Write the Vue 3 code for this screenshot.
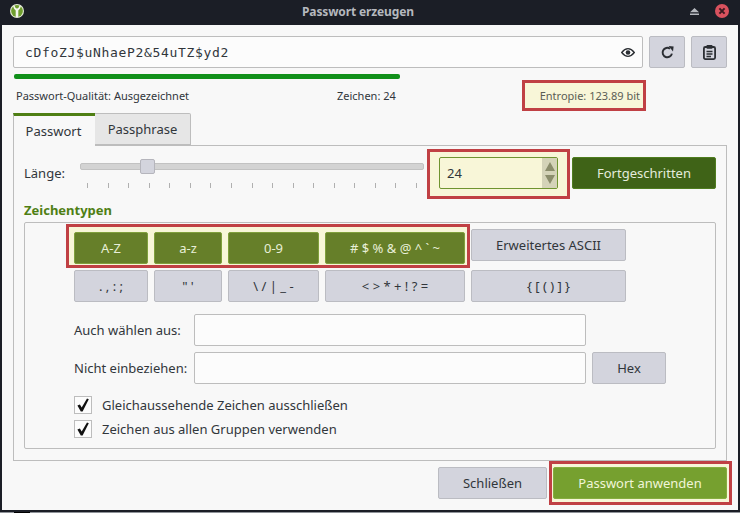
<script setup>
const activeButtons = [
  { label: 'A-Z', w: 74 },
  { label: 'a-z', w: 68 },
  { label: '0-9', w: 91 },
  { label: '# $ % & @ ^ ` ~', w: 140 },
]
const plainButtons = [
  { label: '. , : ;', w: 74 },
  { label: '" \'', w: 68 },
  { label: '\\ / | _ -', w: 91 },
  { label: '< > * + ! ? =', w: 140 },
  { label: '{ [ ( ) ] }', w: 155 },
]
const ticks = Array.from({ length: 17 })
const checks = ['Gleichaussehende Zeichen ausschließen', 'Zeichen aus allen Gruppen verwenden']
</script>

<template>
  <div class="window">
    <header class="titlebar">
      <svg class="logo" width="14" height="14" viewBox="0 0 14 14">
        <circle cx="7" cy="7" r="7" fill="#e6ecd8" />
        <circle cx="7" cy="7" r="5.9" fill="#6f9e2e" />
        <path d="M3 1.8 C3.6 4.6 5 6 5.7 6.4 V13 H8.3 V6.4 C9 6 10.4 4.6 11 1.8 H9.3 C9.1 3.4 8.2 4.4 7 4.4 C5.8 4.4 4.9 3.4 4.7 1.8 Z" fill="#f4f6ee" />
      </svg>
      <span class="title">Passwort erzeugen</span>
      <svg class="eject" width="9" height="7" viewBox="0 0 9 7">
        <path d="M4.5 0 L9 4.2 H0 Z M0 5.4 H9 V7 H0 Z" fill="#b5b8be" />
      </svg>
      <span class="close">
        <svg width="14" height="14" viewBox="0 0 14 14"><path d="M4.4 4.4 L9.6 9.6 M9.6 4.4 L4.4 9.6" stroke="#3a1a20" stroke-width="2" /></svg>
      </span>
    </header>

    <main class="body">
      <div class="pw-row">
        <div class="field pw-field">
          <span class="pw-text">cDfoZJ$uNhaeP2&amp;54uTZ$yd2</span>
          <svg width="14" height="9" viewBox="0 0 14 9">
            <path d="M0.7 4.5 C3 1.5 5 0.7 7 0.7 C9 0.7 11 1.5 13.3 4.5 C11 7.5 9 8.3 7 8.3 C5 8.3 3 7.5 0.7 4.5 Z" fill="none" stroke="#2b2e33" stroke-width="1.3" />
            <circle cx="7" cy="4.5" r="2.3" fill="#2b2e33" />
          </svg>
        </div>
        <button class="btn icon-btn">
          <svg width="13" height="13" viewBox="0 0 13 13">
            <path d="M10.9 7.6 A4.7 4.7 0 1 1 9 2.7" fill="none" stroke="#2b2e33" stroke-width="2" />
            <path d="M7.6 0 L12.6 0.4 L12 5.6 Z" fill="#2b2e33" />
          </svg>
        </button>
        <button class="btn icon-btn">
          <svg width="13" height="15" viewBox="0 0 13 15">
            <rect x="0.9" y="2" width="11.2" height="12.1" rx="1.5" fill="none" stroke="#2b2e33" stroke-width="1.8" />
            <rect x="3.5" y="0" width="6" height="3.8" rx="0.8" fill="#2b2e33" />
            <path d="M3.5 6.5 H9.5 M3.5 9 H9.5 M3.5 11.5 H8" stroke="#2b2e33" stroke-width="1.3" />
          </svg>
        </button>
      </div>

      <div class="progress"></div>

      <div class="stats">
        <span>Passwort-Qualität: Ausgezeichnet</span>
        <span>Zeichen: 24</span>
        <span class="mark entropy">Entropie: 123.89 bit</span>
      </div>

      <div class="tabs">
        <span class="tab active">Passwort</span>
        <span class="tab">Passphrase</span>
      </div>

      <section class="pane">
        <div class="length-row">
          <span class="length-label">Länge:</span>
          <div class="slider">
            <div class="track"><span class="handle"></span></div>
            <div class="ticks"><i v-for="(t, i) in ticks" :key="i"></i></div>
          </div>
          <div class="mark spin-mark">
            <div class="spin">
              <span class="spin-value">24</span>
              <span class="spin-arrows">
                <svg width="10" height="26" viewBox="0 0 10 26">
                  <path d="M5 2 L10 11 H0 Z M0 15 H10 L5 24 Z" fill="#8b8d6c" />
                </svg>
              </span>
            </div>
          </div>
          <button class="btn dark">Fortgeschritten</button>
        </div>

        <h3 class="group-title">Zeichentypen</h3>
        <div class="group">
          <div class="row-one">
            <div class="mark active-mark">
              <button v-for="b in activeButtons" :key="b.label" class="btn on" :style="{ width: b.w + 'px' }">{{ b.label }}</button>
            </div>
            <button class="btn ascii">Erweitertes ASCII</button>
          </div>
          <div class="row-two">
            <button v-for="b in plainButtons" :key="b.label" class="btn" :style="{ width: b.w + 'px' }">{{ b.label }}</button>
          </div>
          <div class="form-row first">
            <span class="form-label">Auch wählen aus:</span>
            <div class="field form-input"></div>
          </div>
          <div class="form-row">
            <span class="form-label">Nicht einbeziehen:</span>
            <div class="field form-input"></div>
            <button class="btn hex">Hex</button>
          </div>
          <div class="checks">
            <label v-for="c in checks" :key="c" class="check">
              <span class="box">
                <svg width="14" height="14" viewBox="0 0 14 14"><path d="M1.4 7.6 L3.9 6.6 L5.7 9.4 L11 0.6 L12.8 1.2 L6.6 13.6 H4.8 Z" fill="#111" /></svg>
              </span>
              {{ c }}
            </label>
          </div>
        </div>
      </section>

      <footer class="actions">
        <button class="btn close-btn">Schließen</button>
        <div class="mark apply-mark">
          <button class="btn apply">Passwort anwenden</button>
        </div>
      </footer>
    </main>
    <div class="strip"><span class="strip-dark"></span></div>
  </div>
</template>

<style>
html, body { margin: 0; background: #1b1e26; }
</style>

<style scoped>
.window {
  width: 740px;
  height: 513px;
  background: #1b1e26;
  display: flex;
  flex-direction: column;
  overflow: hidden;
  font-family: "Noto Sans", sans-serif;
  font-size: 13px;
  color: #31363b;
}
.titlebar {
  box-sizing: border-box;
  height: 25px;
  flex: none;
  display: flex;
  align-items: center;
  padding: 0 11px 3px 10px;
  color: #b5b8be;
}
.logo { flex: none; }
.title {
  flex: 1;
  text-align: center;
  font-weight: 700;
  font-size: 12px;
  letter-spacing: -0.13px;
  padding-left: 2px;
}
.eject { margin-right: 16px; }
.close {
  width: 14px;
  height: 14px;
  border-radius: 50%;
  background: #d9525e;
  display: flex;
}
.body {
  flex: none;
  width: 736px;
  height: 485px;
  margin-left: 2px;
  box-sizing: border-box;
  background: #f8f8f8;
  padding: 11px 11px 0;
  display: flex;
  flex-direction: column;
}
.pw-row { display: flex; gap: 6px; height: 32px; }
.field {
  box-sizing: border-box;
  background: #fcfcfc;
  border: 1px solid #bdbdbd;
  border-radius: 2px;
}
.pw-field {
  flex: 1;
  display: flex;
  align-items: center;
  justify-content: space-between;
  padding: 0 7px 0 11px;
}
.pw-text {
  font-family: "DejaVu Sans Mono", monospace;
  font-size: 13px;
  letter-spacing: 0.67px;
  color: #31363b;
}
.btn {
  box-sizing: border-box;
  height: 32px;
  margin: 0;
  padding: 0;
  background: #d3d4dd;
  border: 1px solid #bbbcc2;
  border-radius: 2px;
  font: inherit;
  color: #31363b;
  display: flex;
  align-items: center;
  justify-content: center;
  flex: none;
}
.icon-btn { width: 36px; }
.progress {
  width: 386px;
  height: 5px;
  margin: 6px 0 0 1px;
  background: #11901a;
  border-radius: 2px;
}
.stats {
  height: 31px;
  margin-top: 1px;
  display: grid;
  grid-template-columns: 321px 185px 124px;
  align-items: center;
  padding-left: 3px;
  font-size: 11px;
}
.mark {
  box-sizing: border-box;
  background: #f8f6d8;
  border: 3px solid #c04044;
}
.entropy {
  height: 31px;
  display: flex;
  align-items: center;
  justify-content: flex-end;
  padding-right: 3px;
  color: #5b5d55;
}
.tabs { display: flex; height: 32px; margin-top: 2px; }
.tab {
  box-sizing: border-box;
  height: 32px;
  display: flex;
  align-items: center;
  justify-content: center;
  width: 96px;
  background: #e6e6e6;
  border: 1px solid #bdbdbd;
  border-left: 0;
  border-radius: 0 2px 0 0;
}
.tab.active {
  width: 82px;
  background: #f8f8f8;
  border-left: 1px solid #bdbdbd;
  border-top: 3px solid #4f7f14;
  border-right: 0;
  border-bottom: 0;
  padding-right: 2px;
  position: relative;
  z-index: 1;
  height: 33px;
  border-radius: 0;
}
.pane {
  box-sizing: border-box;
  height: 316px;
  border: 1px solid #bdbdbd;
  padding: 3px 10px 0;
}
.length-row { display: flex; align-items: flex-start; height: 50px; }
.length-label { width: 56px; flex: none; margin-top: 15px; }
.slider { width: 344px; flex: none; padding-top: 14px; }
.track {
  height: 7px;
  background: #d3d3d3;
  border: 1px solid #c2c2c2;
  box-sizing: border-box;
  border-radius: 2px;
  position: relative;
}
.handle {
  position: absolute;
  left: 59px;
  top: -5px;
  width: 15px;
  height: 15px;
  box-sizing: border-box;
  background: #d3d4dd;
  border: 1px solid #b5b5bc;
  border-radius: 2px;
}
.ticks {
  display: flex;
  justify-content: space-between;
  padding: 13px 7px 0;
}
.ticks i { display: block; width: 1px; height: 5px; background: #b0b0b0; }
.spin-mark {
  width: 143px;
  height: 50px;
  margin-left: 3px;
  padding: 5px 9px 7px;
  flex: none;
}
.spin {
  height: 32px;
  box-sizing: border-box;
  border: 1px solid #6f9430;
  border-radius: 2px;
  display: flex;
  align-items: center;
  overflow: hidden;
}
.spin-value { flex: 1; padding-left: 7px; }
.spin-arrows {
  width: 15px;
  height: 100%;
  background: #d4d3b8;
  display: flex;
  align-items: center;
  justify-content: center;
}
.dark {
  width: 144px;
  margin: 8px 0 0 2px;
  background: #3f6317;
  border-color: #4f7d1f;
  color: #e4ecdc;
}
.group-title {
  margin: 2px 0 3px;
  height: 18px;
  line-height: 18px;
  font-size: 13px;
  font-weight: 700;
  color: #4f7f14;
}
.group {
  box-sizing: border-box;
  height: 227px;
  border: 1px solid #bdbdbd;
  border-radius: 2px;
  padding: 1px 0 0 49px;
}
.row-one { display: flex; margin-left: -8px; }
.active-mark {
  display: flex;
  gap: 6px;
  padding: 5px 2px 1px 5px;
}
.btn.on {
  background: #667f29;
  border-color: #80a03c;
  color: #e8efd8;
}
.ascii { width: 155px; margin: 5px 0 0 1px; }
.row-two { display: flex; gap: 6px; margin-top: 2px; }
.form-row { display: flex; gap: 6px; margin-top: 6px; height: 32px; align-items: center; }
.form-row.first { margin-top: 12px; }
.form-label { width: 114px; flex: none; white-space: nowrap; }
.form-input { width: 392px; height: 32px; }
.hex { width: 74px; }
.checks { margin-top: 12px; display: flex; flex-direction: column; gap: 6px; }
.check { display: flex; align-items: center; gap: 10px; height: 18px; }
.box {
  box-sizing: border-box;
  width: 18px;
  height: 18px;
  border: 1px solid #bdbdbd;
  background: #fcfcfc;
  display: flex;
  align-items: center;
  justify-content: center;
}
.actions { display: flex; justify-content: flex-end; margin-right: -5px; height: 44px; }
.close-btn { width: 109px; margin: 6px 2px 0 0; }
.apply-mark { width: 183px; height: 44px; padding: 3px 2px 3px 1px; }
.apply {
  width: 174px;
  background: #76a02f;
  border-color: #86ad3f;
  color: #f1f5d8;
}
.strip {
  flex: none;
  height: 1px;
  margin-top: 2px;
  background: #8f9399;
  display: flex;
  padding-left: 14px;
}
.strip-dark { width: 16px; height: 1px; background: #000; }
</style>
